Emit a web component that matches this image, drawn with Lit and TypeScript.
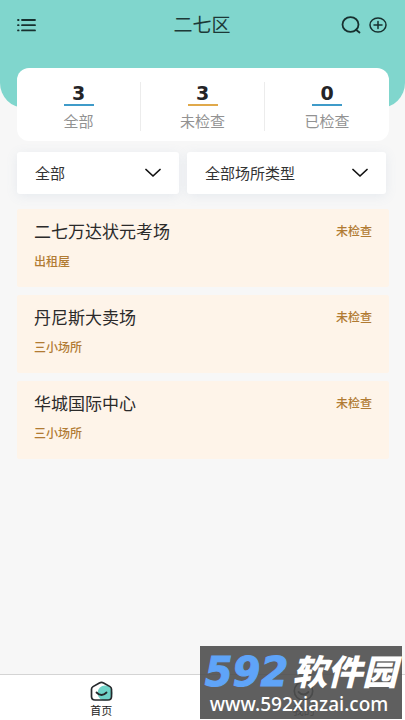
import { LitElement, html, css, svg } from "lit";
import { customElement, property } from "lit/decorators.js";

interface Stat { value: number; label: string; tone: string; }
interface Place { name: string; kind: string; status: string; }

const STATS: Stat[] = [
  { value: 3, label: "全部", tone: "blue" },
  { value: 3, label: "未检查", tone: "amber" },
  { value: 0, label: "已检查", tone: "blue" },
];

const PLACES: Place[] = [
  { name: "二七万达状元考场", kind: "出租屋", status: "未检查" },
  { name: "丹尼斯大卖场", kind: "三小场所", status: "未检查" },
  { name: "华城国际中心", kind: "三小场所", status: "未检查" },
];

@customElement("place-card")
export class PlaceCard extends LitElement {
  @property({ attribute: false }) place!: Place;

  static styles = css`
    :host { display: block; }
    .card {
      display: flex;
      justify-content: space-between;
      background: #fef4e9;
      border-radius: 2px;
      padding: 10px 17px 14px;
    }
    .name { margin: 0; font-size: 17px; line-height: 26px; font-weight: 400; color: #2b2a2a; }
    .kind { margin: 6px 0 0; font-size: 12px; line-height: 22px; color: #b17b33; font-weight: 500; }
    .status { font-size: 12px; line-height: 26px; color: #b17b33; font-weight: 500; }
  `;

  render() {
    return html`
      <article class="card">
        <div>
          <h2 class="name">${this.place.name}</h2>
          <p class="kind">${this.place.kind}</p>
        </div>
        <span class="status">${this.place.status}</span>
      </article>`;
  }
}

@customElement("filter-select")
export class FilterSelect extends LitElement {
  @property() label = "";
  @property({ attribute: false }) options: string[] = [];

  static styles = css`
    :host { display: block; min-width: 0; }
    .box {
      display: grid;
      align-items: center;
      background: #fff;
      border-radius: 3px;
      box-shadow: 0 2px 12px rgba(110, 140, 180, 0.12);
    }
    .select, .arrow { grid-area: 1 / 1; }
    .select {
      appearance: none;
      width: 100%;
      height: 42px;
      padding: 0 40px 0 18px;
      border: 0;
      background: transparent;
      font: inherit;
      font-size: 15px;
      color: #333;
    }
    .arrow { justify-self: end; margin-right: 18px; pointer-events: none; }
  `;

  render() {
    return html`
      <div class="box">
        <select class="select" aria-label=${this.label}>
          ${this.options.map((o) => html`<option>${o}</option>`)}
        </select>
        <svg class="arrow" width="16" height="10" viewBox="0 0 16 10" fill="none"
          stroke="#111" stroke-width="1.7" stroke-linecap="round" stroke-linejoin="round">
          <path d="M1 1.5 8 8l7-6.5" />
        </svg>
      </div>`;
  }
}

const homeIcon = svg`
  <circle cx="15" cy="12" r="7.5" fill="#6fd3c8" />
  <path d="M1.5 8.2Q1.5 6.6 3 5.6L9.4 1.9Q11.5.8 13.6 1.9L20 5.6Q21.5 6.6 21.5 8.2V15.6Q21.5 19 18 19H5Q1.5 19 1.5 15.6Z"
    fill="none" stroke="#25282b" stroke-width="1.7" />
  <path d="M6.5 11.5Q11.5 16.5 16.5 11.5" fill="none" stroke="#25282b" stroke-width="1.8" stroke-linecap="round" />`;

const mineIcon = svg`
  <circle cx="11.5" cy="10" r="9.2" fill="none" stroke="#25282b" stroke-width="1.7" />
  <path d="M6.5 11Q11.5 16 16.5 11" fill="none" stroke="#25282b" stroke-width="1.8" stroke-linecap="round" />`;

@customElement("app-root")
export class AppRoot extends LitElement {
  static styles = css`
    :host {
      display: flex;
      flex-direction: column;
      min-height: 100vh;
      position: relative;
      background: #f7f7f7;
      color: #2b2a2a;
      font-family: "Noto Sans", "Noto Sans CJK SC", sans-serif;
    }
    .head {
      background: #80d6cd;
      border-radius: 0 0 25px 25px;
      height: 108px;
    }
    .bar {
      display: grid;
      grid-template-columns: 1fr auto 1fr;
      align-items: center;
      height: 50px;
      padding: 0 18px 0 17px;
    }
    .title { margin: 0; font-size: 19px; line-height: 28px; font-weight: 400; color: #1d3937; }
    .actions { display: flex; gap: 8px; justify-content: flex-end; }
    .icon {
      display: flex;
      padding: 0;
      border: 0;
      background: none;
      color: #17302f;
      justify-self: start;
      align-items: center;
    }
    .stats {
      display: grid;
      grid-template-columns: repeat(3, 1fr);
      margin: -40px 16px 0 17px;
      padding: 14px 0 10px;
      background: #fff;
      border-radius: 12px;
    }
    .stat {
      display: flex;
      flex-direction: column;
      align-items: center;
      border-right: 1px solid #ececec;
    }
    .stat:last-child { border-right: 0; }
    .value {
      width: 30px;
      height: 22px;
      border-bottom: 2px solid;
      text-align: center;
      font: 700 19px/22px "DejaVu Sans", sans-serif;
      color: #242427;
    }
    .rule.blue { border-color: #3f9bc9; }
    .rule.amber { border-color: #e0a94b; }
    .label { margin-top: 6px; font-size: 15px; line-height: 19px; color: #929292; }
    .filters {
      display: grid;
      grid-template-columns: 162fr 199fr;
      gap: 8px;
      padding: 11px 19px 15px 17px;
    }
    .list { display: flex; flex-direction: column; gap: 8px; padding: 0 16px 20px 17px; flex: 1; }
    .tabs {
      display: grid;
      grid-template-columns: 1fr 1fr;
      background: #fff;
      border-top: 1px solid #d4d4d4;
    }
    .tab {
      display: flex;
      flex-direction: column;
      align-items: center;
      gap: 2px;
      height: 45px;
      padding-top: 6px;
      box-sizing: border-box;
      font-size: 11px;
      line-height: 16px;
      color: #222;
      text-decoration: none;
    }
    .mark {
      position: absolute;
      right: 3px;
      bottom: 1px;
      width: 202px;
      height: 73px;
      background: rgba(78, 78, 78, 0.9);
      overflow: hidden;
      white-space: nowrap;
      color: #fff;
    }
    .brand {
      display: flex;
      justify-content: center;
      align-items: center;
      gap: 4px;
      height: 46px;
      margin-top: 3px;
      font-style: italic;
    }
    .digits {
      font: italic 700 40px/46px "DejaVu Sans", sans-serif;
      color: #5fa4f8;
      -webkit-text-stroke: 1px #5fa4f8;
    }
    .word { font-size: 35px; line-height: 46px; font-weight: 900; }
    .site { display: block; text-align: center; padding-right: 4px; font-size: 19px; line-height: 18px; font-weight: 500; }
  `;

  render() {
    return html`
      <header class="head">
        <div class="bar">
          <button class="icon" aria-label="菜单">
            <svg width="19" height="14" viewBox="0 0 19 14" stroke="currentColor" stroke-width="1.8" stroke-linecap="round">
              <path d="M1 2h.6M5 2h13M1 7.2h.6M5 7.2h13M1 12.4h.6M5 12.4h13" />
            </svg>
          </button>
          <h1 class="title">二七区</h1>
          <div class="actions">
            <button class="icon" aria-label="搜索">
              <svg width="20" height="18" viewBox="0 0 20 18" fill="none" stroke="currentColor" stroke-width="1.8" stroke-linecap="round">
                <ellipse cx="9.5" cy="8.5" rx="8" ry="7.4" /><path d="m15 13.8 3.5 2.7" />
              </svg>
            </button>
            <button class="icon" aria-label="添加">
              <svg width="18" height="16" viewBox="0 0 18 16" fill="none" stroke="currentColor" stroke-width="1.5" stroke-linecap="round">
                <ellipse cx="9" cy="8" rx="8" ry="7" /><path d="M5 8h8M9 4.5v7" />
              </svg>
            </button>
          </div>
        </div>
      </header>
      <section class="stats">
        ${STATS.map((s) => html`
          <div class="stat">
            <span class="value rule ${s.tone}">${s.value}</span>
            <span class="label">${s.label}</span>
          </div>`)}
      </section>
      <div class="filters">
        <filter-select label="检查状态" .options=${["全部", "未检查", "已检查"]}></filter-select>
        <filter-select label="场所类型" .options=${["全部场所类型", "出租屋", "三小场所"]}></filter-select>
      </div>
      <main class="list">
        ${PLACES.map((p) => html`<place-card .place=${p}></place-card>`)}
      </main>
      <nav class="tabs">
        <a class="tab" href="#home"><svg width="23" height="20" viewBox="0 0 23 20">${homeIcon}</svg>首页</a>
        <a class="tab" href="#mine"><svg width="23" height="20" viewBox="0 0 23 20">${mineIcon}</svg>我的</a>
      </nav>
      <div class="mark">
        <div class="brand"><span class="digits">592</span><span class="word">软件园</span></div>
        <span class="site">www.592xiazai.com</span>
      </div>`;
  }
}
